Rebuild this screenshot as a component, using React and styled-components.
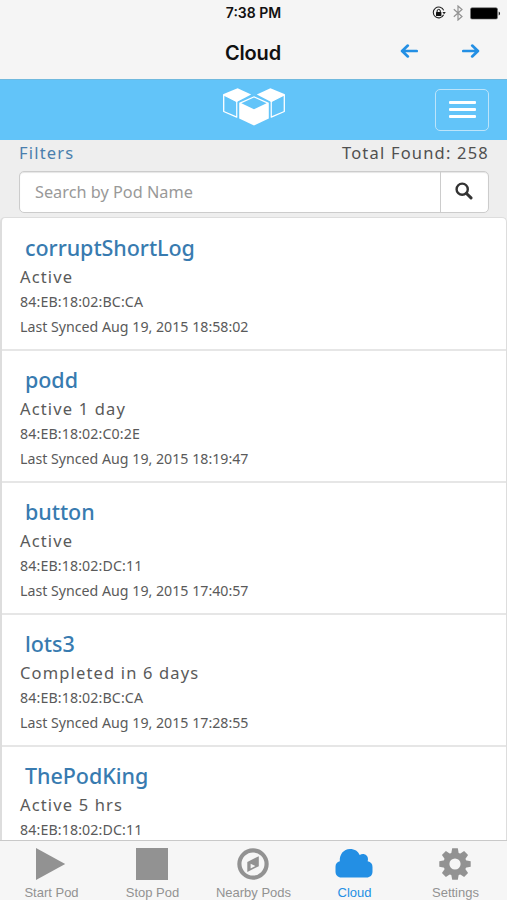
import React from 'react';
import styled, { createGlobalStyle } from 'styled-components';

const GlobalStyle = createGlobalStyle`
  * {
    box-sizing: border-box;
  }

  body {
    margin: 0;
    background: #eeeeee;
    font-family: 'Noto Sans', 'Open Sans', sans-serif;
  }
`;

const Screen = styled.div`
  width: 507px;
  height: 900px;
  display: flex;
  flex-direction: column;
  overflow: hidden;
  background: #eeeeee;
`;

const StatusBar = styled.div`
  height: 26px;
  flex: none;
  display: grid;
  grid-template-columns: 1fr auto 1fr;
  align-items: center;
  padding: 0 6px;
  background: #f5f5f5;
  color: #111;
`;

const Clock = styled.span`
  grid-column: 2;
  font: 600 14px/26px Inter, 'Liberation Sans', sans-serif;
  letter-spacing: 0;
`;

const StatusIcons = styled.div`
  display: flex;
  justify-content: flex-end;
  align-items: center;
  gap: 7px;
`;

const TitleBar = styled.header`
  height: 53px;
  flex: none;
  display: grid;
  grid-template-columns: 1fr auto 1fr;
  align-items: center;
  padding: 0 27px 0 26px;
  background: #f5f5f5;
`;

const ScreenTitle = styled.h1`
  grid-column: 2;
  margin: 0;
  color: #111;
  font: 600 20px/52px Inter, 'Liberation Sans', sans-serif;
  letter-spacing: -0.2px;
`;

const Arrows = styled.div`
  display: flex;
  justify-content: flex-end;
  gap: 44px;
  padding-bottom: 3px;
`;

const Brand = styled.div`
  height: 61px;
  flex: none;
  display: grid;
  grid-template-columns: 1fr auto 1fr;
  align-items: center;
  padding: 0 18px;
  border-top: 1px solid #70b9de;
  background: #62c4f9;

  > svg {
    grid-column: 2;
    margin-bottom: 7px;
  }
`;

const MenuButton = styled.button`
  justify-self: end;
  width: 54px;
  height: 42px;
  margin-bottom: 1px;
  padding: 0;
  display: flex;
  flex-direction: column;
  align-items: center;
  justify-content: center;
  gap: 4px;
  border: 1px solid #bce4fa;
  border-radius: 5px;
  background: transparent;

  span {
    width: 27px;
    height: 3px;
    border-radius: 1px;
    background: #fff;
  }
`;

const Tools = styled.section`
  height: 77px;
  flex: none;
  padding: 0 18px 0 19px;
  background: #eeeeee;
`;

const Summary = styled.div`
  display: flex;
  justify-content: space-between;
  height: 30px;
  color: #505050;
  font-size: 16.5px;
  line-height: 25px;
  letter-spacing: 1.2px;

  a {
    color: #4a7ead;
  }
`;

const SearchGroup = styled.div`
  display: flex;
  height: 42px;
  margin-top: 1px;
  border: 1px solid #cccccc;
  border-radius: 5px;
  background: #fff;
  box-shadow: inset 0 1px 1px rgba(0, 0, 0, 0.1);
`;

const SearchInput = styled.input`
  flex: 1;
  min-width: 0;
  padding: 0 15px 1px;
  border: 0;
  outline: 0;
  background: transparent;
  font: 16.3px 'Noto Sans', 'Open Sans', sans-serif;
  letter-spacing: 0;

  &::placeholder {
    color: #999;
    opacity: 1;
  }
`;

const SearchButton = styled.button`
  width: 48px;
  padding: 0 1px 3px 0;
  display: flex;
  align-items: center;
  justify-content: center;
  border: 0;
  border-left: 1px solid #cccccc;
  background: transparent;
`;

const PodList = styled.div`
  flex: 1;
  min-height: 0;
  overflow: hidden;
  border: 1px solid #dddddd;
  border-left-width: 2px;
  border-bottom: 0;
  border-radius: 5px 5px 0 0;
  background: #fff;
`;

const Pod = styled.article`
  height: 132px;
  padding: 14px 18px 0;
  color: #5a5a5a;

  &:first-child {
    height: 133px;
    padding-top: 15px;
  }

  &:not(:last-child) {
    border-bottom: 2px solid #e6e6e6;
  }
`;

const PodName = styled.h2`
  margin: 0 0 0 5px;
  color: #387bb0;
  font-size: 21.5px;
  font-weight: 500;
  line-height: 30px;
  letter-spacing: -0.05px;
`;

const PodStatus = styled.p`
  margin: 0;
  font-size: 16.5px;
  line-height: 27px;
  letter-spacing: 1.15px;
`;

const PodDetail = styled.p`
  margin: 0;
  font-size: 14.2px;
  line-height: 24.5px;
  letter-spacing: ${({ $mac }) => ($mac ? '0.12px' : '0')};
`;

const TabBar = styled.nav`
  height: 60px;
  flex: none;
  display: grid;
  grid-template-columns: repeat(5, 101px);
  justify-content: center;
  border-top: 1px solid #c9c9c9;
  background: #f6f6f6;
`;

const Tab = styled.div`
  display: flex;
  flex-direction: column;
  align-items: center;
  padding-top: 6px;
  color: ${({ $active }) => ($active ? '#238fe4' : '#929292')};
  font: 13px/16px 'Liberation Sans', sans-serif;

  svg {
    height: 34px;
    margin: 0 1px 4px 0;
  }
`;

const RotationLockIcon = () => (
  <svg width="14" height="14" viewBox="0 0 14 14">
    <path d="M11.6 8.7A5.4 5.4 0 1 1 11.7 4.4" fill="none" stroke="#222" strokeWidth="1.1" />
    <path d="M10.4 6h3.4l-1.7 2.3z" fill="#222" />
    <rect x="4" y="6.1" width="5.4" height="4" rx=".5" fill="#111" />
    <path d="M5.1 6.2V5a1.6 1.6 0 0 1 3.2 0v1.2" fill="none" stroke="#111" strokeWidth="1" />
  </svg>
);

const BluetoothIcon = () => (
  <svg width="10" height="16" viewBox="0 0 10 16">
    <path d="M.8 4.2l8.2 7.3L5 15V1l4 3.5-8.2 7.3" fill="none" stroke="#929292" strokeWidth="1.2" />
  </svg>
);

const BatteryIcon = () => (
  <svg width="31" height="13" viewBox="0 0 31 13">
    <rect x=".5" y=".7" width="27" height="11.4" rx="1.5" fill="#000" stroke="#777" strokeWidth=".6" />
    <path d="M28.7 4.5c1.8.6 1.8 3.4 0 4z" fill="#222" />
  </svg>
);

const ArrowIcon = ({ right }) => (
  <svg width="18" height="14" viewBox="0 0 18 14">
    <path
      d={right ? 'M1.3 7h14M10.2 1.6 15.9 7l-5.7 5.4' : 'M16.7 7h-14M7.8 1.6 2.1 7l5.7 5.4'}
      fill="none"
      stroke="#238fe4"
      strokeWidth="2.7"
      strokeLinecap="round"
      strokeLinejoin="round"
    />
  </svg>
);

const CubesLogo = () => (
  <svg width="64" height="38" viewBox="0 0 64 38">
    <g fill="#fff">
      <path d="M1 6.2 15.6.3 29.2 6.5 14.8 14z" />
      <path d="M63 6.2 48.4.3 34.8 6.5 49.2 14z" />
    </g>
    <g fill="none" stroke="#fff" strokeWidth="1.3" strokeLinejoin="round">
      <path d="M1.7 6.8v16.7l13.1 5.7V13.5zM62.3 6.8v16.7l-13.1 5.7V13.5z" />
    </g>
    <path d="M32 6.6 48.2 14v17L32 38 15.8 31V14z" fill="#62c4f9" />
    <path d="M17.2 14.8 32 8.2l14.8 6.6v15.7L32 37.4 17.2 30.5z" fill="#fff" />
    <path d="M19.4 15.2 32 9.6l12.6 5.6L32 21.2z" fill="#62c4f9" />
  </svg>
);

const SearchIcon = () => (
  <svg width="18" height="18" viewBox="0 0 18 18">
    <circle cx="7.2" cy="7.2" r="5.6" fill="none" stroke="#333" strokeWidth="2.4" />
    <path d="m11.5 11.5 4.5 4.4" stroke="#333" strokeWidth="3" strokeLinecap="round" />
  </svg>
);

const PlayIcon = () => (
  <svg width="30" height="34" viewBox="0 0 30 34">
    <path d="M0 1v32L29.2 17z" fill="currentColor" />
  </svg>
);

const StopIcon = () => (
  <svg width="32" height="34" viewBox="0 0 32 34">
    <path d="M0 1h32v32H0z" fill="currentColor" />
  </svg>
);

const CompassIcon = () => (
  <svg width="32" height="34" viewBox="0 0 32 34">
    <circle cx="16" cy="17" r="13.6" fill="none" stroke="currentColor" strokeWidth="4.2" />
    <path d="M21.8 9.2 10.3 15v10l11.5-5.8z" fill="currentColor" />
    <path d="m13.6 16.7 4.8 2.4-4.8 2.5z" fill="#f6f6f6" />
  </svg>
);

const CloudIcon = () => (
  <svg width="38" height="34" viewBox="0 0 38 34">
    <path
      d="M6.4 30.5C2.8 30.5.5 28.1.5 24.5v-4.7c0-3 1.5-4.8 4.3-5.6C4.3 7.3 8.6 2.3 14.9 2c5 0 8.2 2.2 9.8 6 3.8-2.4 8.4 0 8.3 4.3l-.3 2c3.2.8 4.8 2.5 4.8 5.7v4.5c0 3.7-2.3 6-6.1 6z"
      fill="currentColor"
    />
  </svg>
);

const GearIcon = () => (
  <svg width="32" height="34" viewBox="0 0 32 34">
    <g fill="currentColor">
      {[0, 45, 90, 135, 180, 225, 270, 315].map((angle) => (
        <path key={angle} d="M12 8 13.2 1.3h5.6L20 8z" transform={`rotate(${angle} 16 17)`} />
      ))}
    </g>
    <circle cx="16" cy="17" r="8.6" fill="none" stroke="currentColor" strokeWidth="6" />
  </svg>
);

const pods = [
  { name: 'corruptShortLog', status: 'Active', mac: '84:EB:18:02:BC:CA', synced: 'Aug 19, 2015 18:58:02' },
  { name: 'podd', status: 'Active 1 day', mac: '84:EB:18:02:C0:2E', synced: 'Aug 19, 2015 18:19:47' },
  { name: 'button', status: 'Active', mac: '84:EB:18:02:DC:11', synced: 'Aug 19, 2015 17:40:57' },
  { name: 'lots3', status: 'Completed in 6 days', mac: '84:EB:18:02:BC:CA', synced: 'Aug 19, 2015 17:28:55' },
  { name: 'ThePodKing', status: 'Active 5 hrs', mac: '84:EB:18:02:DC:11' },
];

const tabs = [
  { label: 'Start Pod', icon: PlayIcon },
  { label: 'Stop Pod', icon: StopIcon },
  { label: 'Nearby Pods', icon: CompassIcon },
  { label: 'Cloud', icon: CloudIcon, active: true },
  { label: 'Settings', icon: GearIcon },
];

const App = () => (
  <Screen>
    <GlobalStyle />
    <StatusBar>
      <Clock>7:38 PM</Clock>
      <StatusIcons>
        <RotationLockIcon />
        <BluetoothIcon />
        <BatteryIcon />
      </StatusIcons>
    </StatusBar>
    <TitleBar>
      <ScreenTitle>Cloud</ScreenTitle>
      <Arrows>
        <ArrowIcon />
        <ArrowIcon right />
      </Arrows>
    </TitleBar>
    <Brand>
      <CubesLogo />
      <MenuButton aria-label="Menu">
        <span />
        <span />
        <span />
      </MenuButton>
    </Brand>
    <Tools>
      <Summary>
        <a>Filters</a>
        <span>Total Found: 258</span>
      </Summary>
      <SearchGroup>
        <SearchInput placeholder="Search by Pod Name" />
        <SearchButton aria-label="Search">
          <SearchIcon />
        </SearchButton>
      </SearchGroup>
    </Tools>
    <PodList>
      {pods.map((pod) => (
        <Pod key={pod.name}>
          <PodName>{pod.name}</PodName>
          <PodStatus>{pod.status}</PodStatus>
          <PodDetail $mac>{pod.mac}</PodDetail>
          {pod.synced && <PodDetail>Last Synced {pod.synced}</PodDetail>}
        </Pod>
      ))}
    </PodList>
    <TabBar>
      {tabs.map(({ label, icon: Icon, active }) => (
        <Tab key={label} $active={active}>
          <Icon />
          {label}
        </Tab>
      ))}
    </TabBar>
  </Screen>
);

export default App;
